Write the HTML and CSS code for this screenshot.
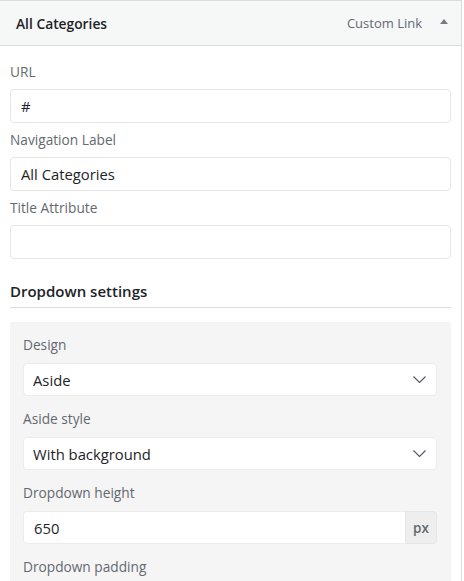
FILE: index.html
```html
<!DOCTYPE html>
<html lang="en">
<head>
    <meta charset="UTF-8">
    <meta name="viewport" content="width=device-width, initial-scale=1.0">
    <title>Menu item</title>
    <link rel="stylesheet" href="styles.css">
</head>
<body>

    <div class="menu-item">
        <!-- Item handle -->
        <div class="item-bar">
            <span class="item-title">All Categories</span>
            <span class="item-type">Custom Link</span>
            <span class="item-toggle">
                <svg width="8" height="5" viewBox="0 0 8 5"><path d="M4 0 L8 5 L0 5 Z" fill="#787c82"/></svg>
            </span>
        </div>

        <!-- Item settings -->
        <div class="item-settings">
            <div class="field">
                <label for="url">URL</label>
                <input type="text" id="url" class="text-input" value="#">
            </div>
            <div class="field">
                <label for="nav-label">Navigation Label</label>
                <input type="text" id="nav-label" class="text-input" value="All Categories">
            </div>
            <div class="field">
                <label for="title-attr">Title Attribute</label>
                <input type="text" id="title-attr" class="text-input" value="">
            </div>

            <h3 class="section-title">Dropdown settings</h3>

            <div class="settings-box">
                <div class="box-field">
                    <label for="design">Design</label>
                    <div class="select-wrap">
                        <select id="design" class="select-input">
                            <option>Aside</option>
                        </select>
                        <svg class="chevron" width="13" height="7" viewBox="0 0 13 7"><path d="M0.5 0.5 L6.5 6.5 L12.5 0.5" fill="none" stroke="#50575e" stroke-width="1.1"/></svg>
                    </div>
                </div>
                <div class="box-field">
                    <label for="aside-style">Aside style</label>
                    <div class="select-wrap">
                        <select id="aside-style" class="select-input">
                            <option>With background</option>
                        </select>
                        <svg class="chevron" width="13" height="7" viewBox="0 0 13 7"><path d="M0.5 0.5 L6.5 6.5 L12.5 0.5" fill="none" stroke="#50575e" stroke-width="1.1"/></svg>
                    </div>
                </div>
                <div class="box-field">
                    <label for="dd-height">Dropdown height</label>
                    <div class="input-group">
                        <input type="text" id="dd-height" class="group-input" value="650">
                        <span class="addon">px</span>
                    </div>
                </div>
                <div class="box-field">
                    <label for="dd-padding">Dropdown padding</label>
                </div>
            </div>
        </div>
    </div>

</body>
</html>
```

FILE: styles.css
```css
* { box-sizing: border-box; }
body { margin: 0; font-family: "Open Sans", "Noto Sans", Arial, sans-serif; font-size: 13px; color: #2c3338; background: #fff; }

.menu-item { width: 462px; border-top: 1px solid #dcdcde; border-right: 1px solid #dcdcde; }

.item-bar { display: flex; align-items: center; height: 45px; padding: 0 16px; background: #f6f7f7; border-bottom: 1px solid #dcdcde; }
.item-title { flex: 1; font-weight: 600; font-size: 13.8px; color: #1d2327; }
.item-type { color: #646970; font-size: 13px; margin-right: 18px; }
.item-toggle { display: flex; margin-right: -3px; margin-top: -3px; }

.item-settings { padding: 16px 10px 0; }

.field { margin-bottom: 7px; }
.field label, .box-field label { display: block; line-height: 20px; margin-bottom: 7px; color: #646970; font-size: 13.7px; }

.text-input { display: block; width: 100%; height: 34px; padding: 0 10px; border: 1px solid #e5e5e5; border-radius: 4px; font-family: inherit; font-size: 14.8px; color: #1d2327; background: #fff; outline: none; }

.section-title { margin: 21px 0 14px; padding-bottom: 5px; line-height: 22px; font-size: 15px; font-weight: 600; color: #1d2327; border-bottom: 1px solid #dcdcde; }

.settings-box { background: #f5f5f5; padding: 13px 14px 10px 13px; height: 260px; }
.box-field { margin-bottom: 13px; }
.box-field label { margin-bottom: 8px; }

.select-wrap { position: relative; }
.select-input { display: block; width: 100%; height: 33px; padding: 0 9px; border: 1px solid #ececec; border-radius: 4px; background: #fff; font-family: inherit; font-size: 14.8px; color: #1d2327; appearance: none; -webkit-appearance: none; outline: none; }
.chevron { position: absolute; right: 11px; top: 13px; pointer-events: none; }

.input-group { display: flex; height: 33px; }
.group-input { flex: 1; min-width: 0; padding: 0 10px; border: 1px solid #ececec; border-right: none; border-radius: 4px 0 0 4px; background: #fff; font-family: inherit; font-size: 14.8px; color: #1d2327; outline: none; }
.addon { display: flex; align-items: center; justify-content: center; width: 32px; background: #eeeeee; border: 1px solid #e6e6e6; border-radius: 0 4px 4px 0; color: #646970; font-size: 13.5px; font-weight: 600; }
```
